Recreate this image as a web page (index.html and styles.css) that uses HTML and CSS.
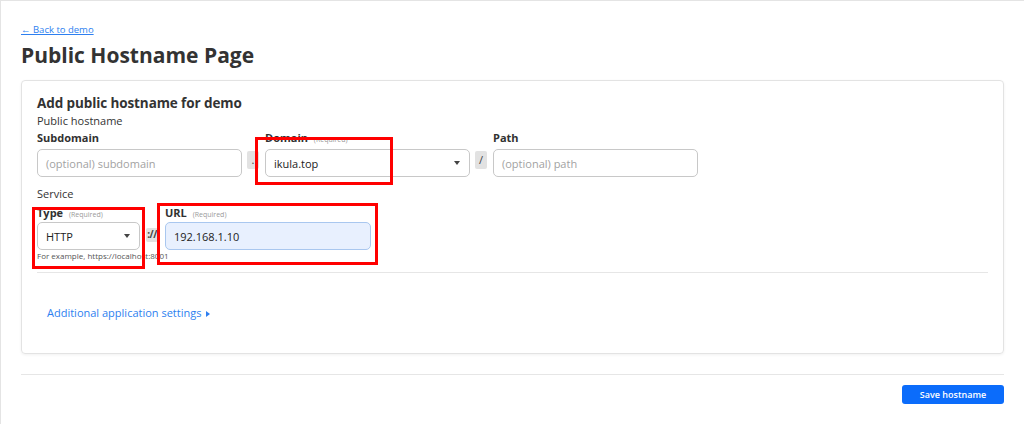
FILE: index.html
```html
<!DOCTYPE html>
<html lang="en">
<head>
<meta charset="utf-8">
<title>Public Hostname Page</title>
<link rel="stylesheet" href="styles.css">
</head>
<body>
<div class="page">
  <a class="back" href="#">← Back to demo</a>
  <h1 class="title">Public Hostname Page</h1>

  <section class="card">
    <h2 class="card-title">Add public hostname for demo</h2>
    <div class="group-label">Public hostname</div>
    <div class="row">
      <div class="field field-sub">
        <div class="label">Subdomain</div>
        <div class="input placeholder">(optional) subdomain</div>
      </div>
      <div class="sep">.</div>
      <div class="field field-domain">
        <div class="label">Domain <span class="req">(Required)</span></div>
        <div class="input select">ikula.top<span class="caret"></span></div>
      </div>
      <div class="sep">/</div>
      <div class="field field-path">
        <div class="label">Path</div>
        <div class="input placeholder">(optional) path</div>
      </div>
    </div>

    <div class="group-label service">Service</div>
    <div class="row">
      <div class="field field-type">
        <div class="label">Type <span class="req">(Required)</span></div>
        <div class="input select">HTTP<span class="caret"></span></div>
        <div class="help">For example, https://localhost:8001</div>
      </div>
      <div class="sep sep-proto">://</div>
      <div class="field field-url">
        <div class="label">URL <span class="req">(Required)</span></div>
        <div class="input filled">192.168.1.10</div>
      </div>
    </div>

    <hr class="card-divider">

    <a class="more" href="#">Additional application settings <span class="tri"></span></a>
  </section>

  <hr class="page-divider">
  <div class="actions">
    <button class="btn">Save hostname</button>
  </div>
</div>

<div class="mark mark-domain"></div>
<div class="mark mark-type"></div>
<div class="mark mark-url"></div>
</body>
</html>
```

FILE: styles.css
```css
html, body {
  margin: 0;
  padding: 0;
  background: #fff;
}
body {
  position: relative;
  width: 1024px;
  height: 424px;
  overflow: hidden;
  font-family: "Open Sans", "Noto Sans", sans-serif;
  color: #313131;
}
.page {
  box-sizing: border-box;
  height: 424px;
  border-top: 1px solid #e4e4e4;
  border-left: 1px solid #e4e4e4;
  padding: 23px 20px 0 20px;
  display: flex;
  flex-direction: column;
  align-items: flex-start;
}
.back {
  font-size: 9.5px;
  line-height: 12px;
  color: #2d7ff0;
  text-decoration: underline;
}
.title {
  margin: 5px 0 0 0;
  font-size: 21px;
  line-height: 28px;
  font-weight: 700;
  color: #333;
}
.card {
  box-sizing: border-box;
  align-self: stretch;
  margin-top: 11px;
  border: 1px solid #e3e3e3;
  border-radius: 4px;
  box-shadow: 0 1px 3px rgba(0,0,0,0.06);
  padding: 13px 15px 31px 15px;
  height: 274px;
}
.card-title {
  margin: 0;
  font-size: 13.5px;
  line-height: 18px;
  font-weight: 700;
  color: #333;
  letter-spacing: -0.1px;
}
.group-label {
  margin-top: 2px;
  font-size: 11px;
  line-height: 14px;
  color: #333;
}
.group-label.service {
  margin-top: 10px;
}
.row {
  display: flex;
  align-items: flex-start;
}
.field {
  display: flex;
  flex-direction: column;
}
.label {
  margin-top: 3px;
  font-size: 11px;
  line-height: 14px;
  font-weight: 700;
  color: #313131;
  height: 14px;
}
.service + .row .label {
  margin-top: 5px;
}
.req {
  font-size: 7px;
  font-weight: 400;
  color: #9a9a9a;
  margin-left: 3px;
}
.input {
  box-sizing: border-box;
  margin-top: 4px;
  height: 28px;
  border: 1px solid #c8c8c8;
  border-radius: 5px;
  padding: 0 8px;
  font-size: 11px;
  line-height: 27px;
  color: #222;
  position: relative;
}
.service + .row .input {
  margin-top: 2px;
}
.placeholder { color: #a2a2a2; }
.select { padding-right: 20px; }
.caret {
  position: absolute;
  right: 9px;
  top: 11px;
  width: 0;
  height: 0;
  border-left: 3px solid transparent;
  border-right: 3px solid transparent;
  border-top: 4px solid #444;
}
.filled {
  background: #e8f0fe;
  border-color: #a9c7ef;
}
.field-sub { width: 205px; }
.field-domain { width: 205px; }
.field-path { width: 205px; }
.field-type { width: 103px; }
.field-url { width: 206px; }
.sep {
  box-sizing: border-box;
  margin: 23px 6px 0 5px;
  width: 12px;
  height: 18px;
  background: #e2e2e2;
  border-radius: 2px;
  font-size: 11px;
  line-height: 18px;
  text-align: center;
  color: #444;
}
.sep-proto {
  margin: 27px 7px 0 6px;
  height: 14px;
  line-height: 13px;
  font-weight: 700;
  font-size: 10px;
  letter-spacing: -0.5px;
}
.help {
  margin-top: 1px;
  font-size: 8px;
  line-height: 10px;
  color: #555;
  white-space: nowrap;
}
.card-divider {
  margin: 11px 0 0 0;
  border: 0;
  border-top: 1px solid #e6e6e6;
  height: 0;
}
.more {
  display: inline-block;
  margin: 33px 0 0 10px;
  font-size: 11px;
  line-height: 14px;
  color: #2d7ff0;
  text-decoration: none;
}
.tri {
  display: inline-block;
  margin-left: 2px;
  width: 0;
  height: 0;
  border-top: 3.5px solid transparent;
  border-bottom: 3.5px solid transparent;
  border-left: 4px solid #2d7ff0;
}
.page-divider {
  align-self: stretch;
  margin: 20px 0 0 0;
  border: 0;
  border-top: 1px solid #e6e6e6;
  height: 0;
}
.actions {
  align-self: stretch;
  display: flex;
  justify-content: flex-end;
  margin-top: 10px;
}
.btn {
  width: 102px;
  height: 19px;
  border: 0;
  border-radius: 3px;
  background: #0b6cfb;
  color: #fff;
  font-family: "Open Sans", "Noto Sans", sans-serif;
  font-size: 9px;
  font-weight: 600;
  padding: 0;
}
.mark {
  position: absolute;
  box-sizing: border-box;
  border: 3px solid #f00;
}
.mark-domain { left: 255px; top: 137px; width: 138px; height: 48px; }
.mark-type { left: 32px; top: 207px; width: 113px; height: 62px; }
.mark-url { left: 157px; top: 203px; width: 221px; height: 62px; }
```
